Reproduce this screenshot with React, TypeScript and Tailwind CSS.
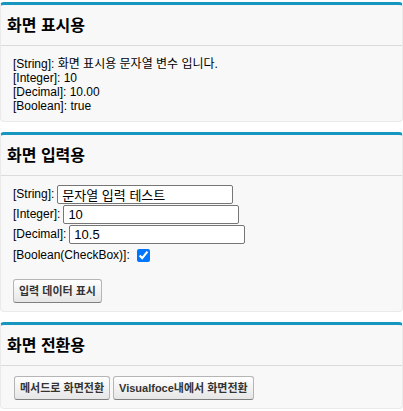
import React from 'react';

const font = { fontFamily: '"Liberation Sans", Arial, "Noto Sans CJK KR", sans-serif' };

const Block = ({ title, children }: { title: string; children: React.ReactNode }) => (
  <div className="rounded-[4px] border border-[#eaeaea] border-t-[3px] border-t-[#1797c0] bg-[#f8f8f8]">
    <div className="flex h-[41px] items-center border-b border-[#dbdbdb] px-[6px] pt-[2px]">
      <h2 className="text-[16px] font-bold text-[#000]">{title}</h2>
    </div>
    {children}
  </div>
);

const Btn = ({ children }: { children: React.ReactNode }) => (
  <button className="h-[24px] rounded-[3px] border border-[#b5b5b5] border-b-[#7f7f7f] bg-gradient-to-b from-[#ffffff] to-[#e6e6e6] px-[5px] text-[11px] font-bold text-[#333]">
    {children}
  </button>
);

const Field = ({ label, value }: { label: string; value: string }) => (
  <div className="flex h-[20px] items-center">
    <span>{label}:</span>
    <input
      defaultValue={value}
      className="ml-[3px] h-[19px] w-[176px] rounded-[2px] border border-[#767676] bg-white px-[4px] text-[13px] text-black"
      style={font}
    />
  </div>
);

export default function App() {
  return (
    <div className="flex min-h-[411px] flex-col gap-[10px] bg-white pt-[2px] text-[12px] leading-[14px] text-[#000]" style={font}>
      <Block title="화면 표시용">
        <div className="px-[12px] pb-[8px] pt-[11px]">
          <div>[String]: 화면 표시용 문자열 변수 입니다.</div>
          <div>[Integer]: 10</div>
          <div>[Decimal]: 10.00</div>
          <div>[Boolean]: true</div>
        </div>
      </Block>

      <Block title="화면 입력용">
        <div className="px-[12px] pb-[8px] pt-[8px]">
          <Field label="[String]" value="문자열 입력 테스트" />
          <Field label="[Integer]" value="10" />
          <Field label="[Decimal]" value="10.5" />
          <div className="flex h-[22px] items-center">
            <span>[Boolean(CheckBox)]:</span>
            <input type="checkbox" defaultChecked className="ml-[7px] h-[13px] w-[13px] accent-[#0075ff]" />
          </div>
          <div className="pt-[13px]">
            <Btn>입력 데이터 표시</Btn>
          </div>
        </div>
      </Block>

      <Block title="화면 전환용">
        <div className="flex gap-[3px] px-[13px] pb-[8px] pt-[10px]">
          <Btn>메서드로 화면전환</Btn>
          <Btn>Visualfoce내에서 화면전환</Btn>
        </div>
      </Block>
    </div>
  );
}
